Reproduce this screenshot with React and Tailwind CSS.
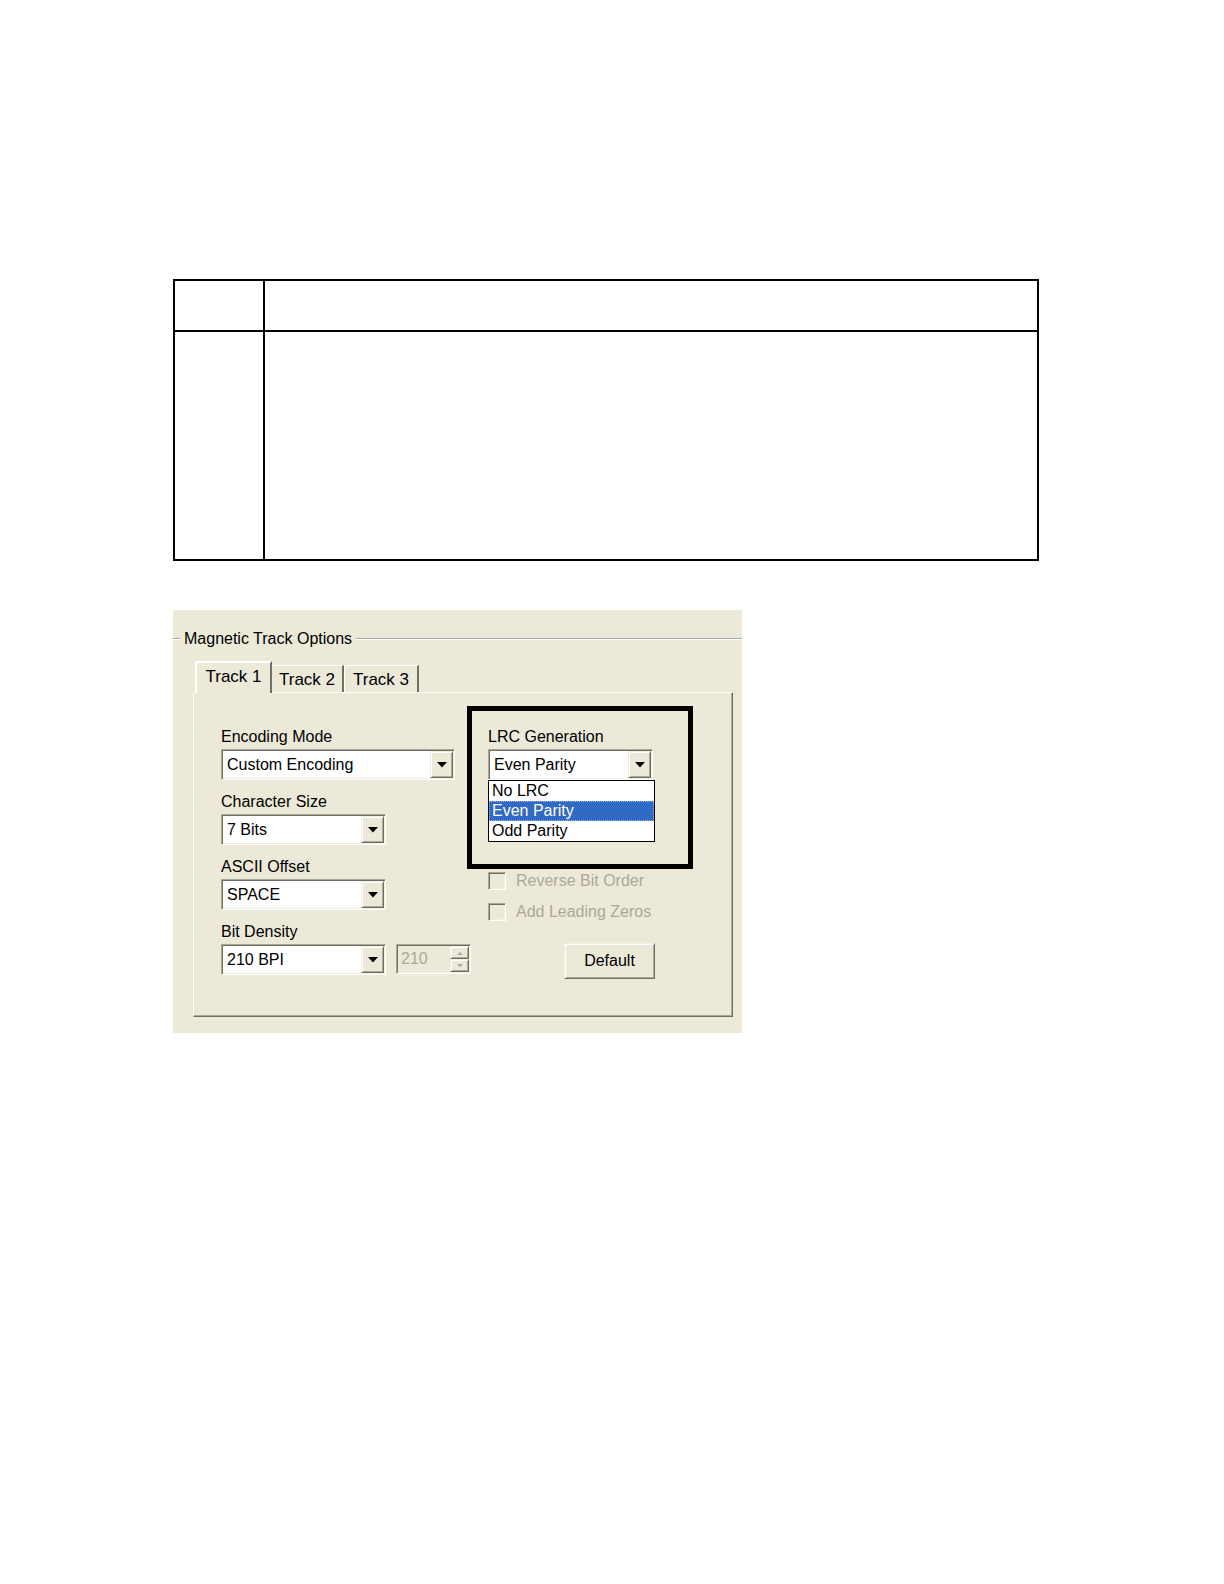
import React from "react";

const face = "bg-[#ECE9D8]";

// sunken 2px edge used by edit fields and combo boxes
const sunken =
  "border border-t-[#ACA899] border-l-[#ACA899] border-r-white border-b-white shadow-[inset_1px_1px_0_#716F64,inset_-1px_-1px_0_#F1EFE2]";

// raised 2px edge used by buttons
const raised =
  "border border-t-[#F1EFE2] border-l-[#F1EFE2] border-r-[#716F64] border-b-[#716F64] shadow-[inset_1px_1px_0_#ffffff,inset_-1px_-1px_0_#ACA899]";

const Arrow = ({ color = "#000" }) => (
  <svg width="10" height="6" viewBox="0 0 10 6">
    <polygon points="0,0 10,0 5,5.5" fill={color} />
  </svg>
);

const Combo = ({ text, width, children }) => (
  <div className={`relative flex h-[31px] bg-white p-[1px] ${sunken} ${width}`}>
    <div className="flex-1 pl-[4px] leading-[27px] text-black">{text}</div>
    <div className={`flex w-[23px] items-center justify-center ${face} ${raised}`}>
      <Arrow />
    </div>
    {children}
  </div>
);

const Field = ({ label, children, first }) => (
  <div className={first ? "" : "mt-[13px]"}>
    <div className="h-[18px] leading-[18px]">{label}</div>
    <div className="mt-[3px]">{children}</div>
  </div>
);

const Check = ({ label, className }) => (
  <div className={`flex items-center ${className}`}>
    <div className={`h-[18px] w-[18px] ${face} ${sunken}`} />
    <span className="ml-[10px] leading-[18px] text-[#ACA899]">{label}</span>
  </div>
);

const Spin = () => (
  <div className={`ml-[10px] flex h-[30px] w-[75px] ${face} p-[1px] ${sunken}`}>
    <div className="flex-1 pl-[3px] leading-[26px] text-[#ACA899]">210</div>
    <div className="flex w-[19px] flex-col">
      <div className={`flex flex-1 items-center justify-center ${raised}`}>
        <svg width="6" height="4" viewBox="0 0 6 4">
          <polygon points="0,4 6,4 3,1" fill="#ACA899" />
        </svg>
      </div>
      <div className={`flex flex-1 items-center justify-center ${raised}`}>
        <svg width="6" height="4" viewBox="0 0 6 4">
          <polygon points="0,0 6,0 3,3" fill="#ACA899" />
        </svg>
      </div>
    </div>
  </div>
);

const App = () => {
  return (
    <div className="min-h-[1584px] w-[1224px] bg-white pl-[173px] pt-[279px] font-['Liberation_Sans',Arial,sans-serif] text-[16px] text-black">
      {/* empty two-column table */}
      <div className="w-[866px] border-2 border-black">
        <div className="flex h-[51px] border-b-2 border-black">
          <div className="w-[90px] border-r-2 border-black" />
          <div className="flex-1" />
        </div>
        <div className="flex h-[227px]">
          <div className="w-[90px] border-r-2 border-black" />
          <div className="flex-1" />
        </div>
      </div>

      {/* dialog screenshot */}
      <div className={`mt-[49px] h-[423px] w-[569px] overflow-hidden ${face}`}>
        {/* group box caption */}
        <div className="flex items-center pt-[20px]">
          <div className="h-[2px] w-[7px] border-t border-b border-t-[#ACA899] border-b-white" />
          <span className="px-[4px] leading-[18px]">Magnetic Track Options</span>
          <div className="h-[2px] flex-1 border-t border-b border-t-[#ACA899] border-b-white" />
        </div>

        {/* tabs */}
        <div className="ml-[22px] mt-[13px] flex h-[31px] items-end text-[17px]">
          <div className="relative z-10 -mb-[1px] flex h-[32px] w-[77px] items-start justify-center rounded-tl-[3px] border-l-2 border-t-2 border-r-2 border-l-white border-t-white border-r-[#716F64] bg-[#ECE9D8] pt-[1px]">
            Track 1
          </div>
          <div className="flex h-[27px] w-[72px] items-center justify-center border-t border-r-2 border-t-white border-r-[#716F64] pt-[1px]">
            Track 2
          </div>
          <div className="flex h-[27px] w-[75px] items-center justify-center border-l border-t border-r-2 border-l-white border-t-white border-r-[#716F64] pt-[1px]">
            Track 3
          </div>
        </div>

        {/* tab page */}
        <div className="ml-[20px] flex h-[325px] w-[540px] items-start border border-t-white border-l-white border-r-[#716F64] border-b-[#716F64] pl-[27px] pt-[14px] shadow-[inset_-1px_-1px_0_#ACA899]">
          <div className="mt-[21px] w-[246px]">
            <Field label="Encoding Mode" first>
              <Combo text="Custom Encoding" width="w-[234px]" />
            </Field>
            <Field label="Character Size">
              <Combo text="7 Bits" width="w-[165px]" />
            </Field>
            <Field label="ASCII Offset">
              <Combo text="SPACE" width="w-[165px]" />
            </Field>
            <Field label="Bit Density">
              <div className="flex w-[300px] items-start">
                <Combo text="210 BPI" width="w-[165px]" />
                <Spin />
              </div>
            </Field>
          </div>

          <div className="w-[226px]">
            <div className="-mt-[1px] h-[163px] border-[5px] border-black pl-[16px] pt-[17px]">
              <div className="h-[18px] leading-[18px]">LRC Generation</div>
              <div className="mt-[3px]">
                <Combo text="Even Parity" width="w-[165px]">
                  <div className="absolute left-[-1px] top-[30px] z-20 w-[167px] border border-black bg-white">
                    <div className="h-[20px] pl-[3px] leading-[20px]">No LRC</div>
                    <div className="h-[20px] border border-dotted border-[#9ab6e6] bg-[#316AC5] pl-[2px] leading-[18px] text-white">
                      Even Parity
                    </div>
                    <div className="h-[20px] pl-[3px] leading-[20px]">Odd Parity</div>
                  </div>
                </Combo>
              </div>
            </div>
            <Check label="Reverse Bit Order" className="ml-[21px] mt-[3px]" />
            <Check label="Add Leading Zeros" className="ml-[21px] mt-[13px]" />
            <div
              className={`ml-[97px] mt-[22px] flex h-[36px] w-[91px] items-center justify-center ${face} ${raised}`}
            >
              Default
            </div>
          </div>
        </div>
      </div>
    </div>
  );
};

export default App;
